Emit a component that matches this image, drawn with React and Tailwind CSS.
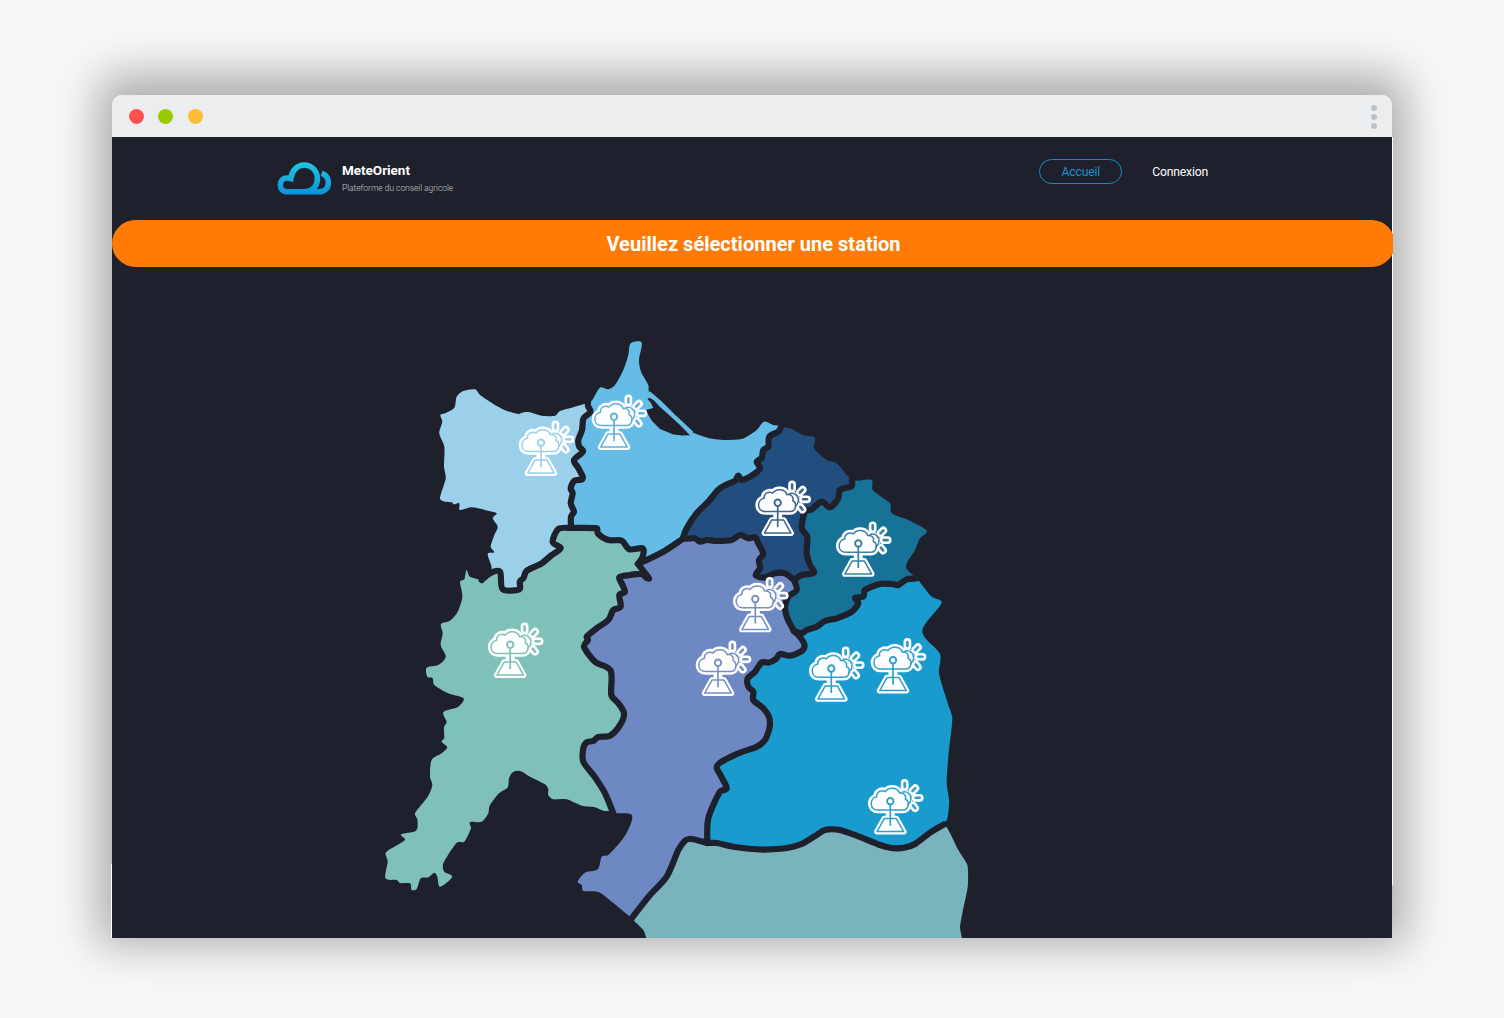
const BG = "#1e202b";

// Shared frontiers between neighbouring provinces.
const AB = "588,403 588,406 590.5,412 583.5,418.5 582,430 578.3,440 579.3,446.7 583,451.5 574,460 578.3,468 582.7,476.5 582,479.5 574.3,480.7 570.7,488.3 572.7,493.3 570.7,503.3 574,511.7 571,516.7 571,527";
const A_GREEN = "481.7,580 490,573.3 500,571.7 502.7,589.3 519.3,589.3 519.8,581.7 523.5,578 526.7,570.7 541.7,563.3 551.7,555 560.7,548 552.7,542 558.3,529 571,528";
const B_GREEN = "571,528 596.7,528.3 597.7,533.3 608.3,540 621.7,540.7 629.3,549.3 642.7,548.3 642.7,556.7 638,564";
const GREEN_PURPLE = "638,564 649,578.5 646,577.5 641.7,574 630,575 619.3,577.3 622,584 625,591.7 619.3,595 620.7,606.7 613.3,610 608.3,620 596.7,628.3 586.7,636.7 588,640 584,646.7 595,661.7 610.7,670.7 611.3,695 618.3,703.3 624,713.3 620,725 610,735.7 598.3,737 593,741 586.7,742.3 583.3,748.3 583.3,761.7 595,777.3 605,793.3 613.3,813.3";
const BC = "781,427 778.3,431.7 769.3,436.7 768.3,446.7 763.3,450 761.7,457.7 756.7,461.7 760,468.3 751.7,475.7 741.7,480 738.3,475.7 735,480.7 720,488.3 708.3,501.7 696.7,513.3 686.7,528.3 682.5,539";
const B_PURPLE = "682.5,539 663.3,551.7 638,564";
const C_PURPLE = "682.5,539 695,538.3 700,541.7 707,540 716,541 731.7,540 740,535 748.3,538.3 755,537.3 758.3,543.3 763.3,554 759,560 760,568.3 755.7,575 765,577.5 775,573.3 785,573.3 794,580";
const CD = "794,580 801.7,575 814,572.7 810,565 806.7,553.3 807.3,536.7 801.7,528.3 805,511.7 811.7,509.3 821.7,501.7 830,507.3 838.3,498.3 840,490 851.7,486 851.7,480";
const D_PURPLE = "794,580 796.7,590 788.3,596.7 785,606.7 787.3,618.3 794,631";
const DE = "794,631 801.7,633.3 806.7,630 816.7,626.7 825,621 836.7,618.3 851.7,611.7 858.3,603.3 855,597.7 863.3,596.7 865,590 880,584 892,584 898.3,585 906.7,579.3 916,578.5";
const E_PURPLE = "794,631 800,637 804.5,645 801.7,651 790,655.7 780,654 776,659 768.3,662.7 761.7,662.3 755,671.7 747.7,678.3 748.3,686.7 753.3,691.7 753.3,700 763.3,708.3 769,716.7 770,724 769,730 765,740 756.7,746.7 740,752.7 721.7,761.7 716.7,767.3 722,778 726.7,788.3 720,791.7 708.3,818.3 707.3,843";
const EF = "707.3,843 716.7,843 736.7,847.3 760,849.5 783.3,848.5 794,846.5 803.3,843.3 816.7,835 823,830.8 828.3,829.3 840,830 856.7,835.7 880,845 890,847.8 896.7,848.3 905,847.5 915,844 930,832.7 944,824.3";
const F_PURPLE = "707.3,843 693.3,839.3 689,839 685,840.7 678.3,850 666.7,876.7 650,895 631.7,918.3";

// Outlines facing the sea or the outside of the map.
const A_COAST = "487,574 491.7,568.3 487.7,554 494.3,552.3 490.7,546.7 494.3,535 497.7,526.7 492.7,518.3 496.7,513.3 489,511 471.7,507.3 460,510 459.3,503.3 454,504.5 451.7,502.3 445,501.7 440,498.3 445.7,478.3 444,466.7 444.3,446.7 439.3,433.3 442.3,421.7 440.3,415 445,413.3 454.3,407.7 456.7,396.7 463.3,391 475,389.3 480,395 496.7,406 507,411 518.3,414 523,412.5 530,412.3 541.7,415.7 555,415.7 560,411 571.7,407.7 584.3,404 588,403";
const B_COAST = "589,404 593,399 600,387.7 608.3,389.3 615,385 623.3,370 628.3,355 630.7,343.3 641.7,342.7 639,360 641,371.7 648.3,385 649.3,392.3 660,401.7 675,416.7 688.3,430 703.3,436.5 715,439.3 726.7,440 738,439.5 745,437.7 756.7,430 764,421.7 773.3,425 782,425.7";
const C_COAST = "781,427 790,428.3 803.3,435 815,437.7 814,448.3 826.7,460 836.7,463.3 846.7,475 851.7,480";
const D_COAST = "851.7,480 858,480.7 871.7,480 872.7,490 890,503.3 891.7,513.3 908.3,520 926.7,530.7 920,538.3 915,550 906,566.7 917,578.5";
const E_COAST = "917,578.5 923.3,586.7 931.7,596.7 941.7,602.7 922.3,631 940,654 939,673.3 948.3,705 952.3,718.3 948.3,756.7 946.7,783.3 949,800 947.7,816.7 944,824.3";
const F_EDGE = "944,824.3 958.3,850 967,864 968,872 967.7,886.7 963,910 960,926.7 960,940 649,940 643.3,930 633.3,920 631.7,918.3";
const GREEN_EDGE = "613.3,811 603.3,810.7 595,807.3 581.7,805.7 566.7,799.3 553.3,799.3 548.3,795 548.3,789 545,784.3 530,776.7 521.7,771.5 517,770.7 512.5,772.5 509,778.3 507.7,787.3 498.3,794 489.5,806 488.3,813.3 481.7,821.7 470,822 471,828.3 464.3,841.7 456.7,842.7 443.3,863.3 444.3,871.7 452.3,876.7 440,886.7 437.3,876.7 434.3,872.7 428.3,877.3 420.7,878.3 416.7,889 411.7,890 410,883.3 400,883 396.7,880 385.5,878.3 387.7,861.7 386,852.3 405,840 401,834.3 416,830.7 417.5,820 415,813.3 427.7,796.7 432.3,785 430,776.7 431.7,760 441.7,753.3 447.3,747.3 441.7,741.7 444.3,738 444,727 446.7,722 443.5,712 458.3,706.7 463.5,698.3 448.3,693.3 434.3,685 432.5,678 427.3,676.7 426.7,667.7 438.3,665 445.7,656.7 440.7,645 442.7,633.3 441,624 450,620.7 457.7,611.7 462.3,596.7 460,581.7 464.3,579.3 466.5,570 470,576.7 481.7,580";
const PURPLE_EDGE = "631.7,918.3 630,916.7 611.7,901.7 598.3,892 583.3,891 581.7,885 577.7,881.7 585,872.7 597.7,869.3 601.7,856.7 608.3,855 623.3,838.3 631,823.3 631,814.3 613.3,813.3";

const rev = (s) => s.split(" ").reverse().join(" ");
const ring = (...parts) => parts.join(" ");

// Softens the corners of a list of points with a loose Catmull-Rom spline.
function smooth(points, closed) {
  const all = points.split(" ").map((p) => p.split(",").map(Number));
  const pts = all.filter((p, i) => i === 0 || p[0] !== all[i - 1][0] || p[1] !== all[i - 1][1]);
  const n = pts.length;
  const at = (i) => (closed ? pts[(i + n) % n] : pts[Math.max(0, Math.min(n - 1, i))]);
  const handle = (p, a, b, other, sign) => {
    const dx = b[0] - a[0];
    const dy = b[1] - a[1];
    const len = Math.hypot(dx, dy) || 1;
    const reach = Math.min(len * 0.15, Math.hypot(other[0] - p[0], other[1] - p[1]) * 0.3);
    return [(p[0] + (sign * dx * reach) / len).toFixed(1), (p[1] + (sign * dy * reach) / len).toFixed(1)];
  };
  let d = `M${pts[0][0]} ${pts[0][1]}`;
  for (let i = 0; i < (closed ? n : n - 1); i++) {
    const [p0, p1, p2, p3] = [at(i - 1), at(i), at(i + 1), at(i + 2)];
    const c1 = handle(p1, p0, p2, p2, 1);
    const c2 = handle(p2, p1, p3, p1, -1);
    d += `C${c1[0]} ${c1[1]} ${c2[0]} ${c2[1]} ${p2[0]} ${p2[1]}`;
  }
  return closed ? d + "Z" : d;
}

const REGIONS = [
  { fill: "#9bd0eb", points: ring(A_COAST, AB, rev(A_GREEN)) },
  { fill: "#64bce7", points: ring(B_COAST, BC, B_PURPLE, rev(B_GREEN), rev(AB)) },
  { fill: "#224e7f", points: ring(C_COAST, rev(CD), rev(C_PURPLE), rev(BC)) },
  { fill: "#177297", points: ring(D_COAST, rev(DE), rev(D_PURPLE), CD) },
  { fill: "#199ccd", points: ring(E_COAST, rev(EF), rev(E_PURPLE), DE) },
  { fill: "#7fc1b9", points: ring(A_GREEN, B_GREEN, GREEN_PURPLE, GREEN_EDGE) },
  { fill: "#6d88c3", points: ring(rev(GREEN_PURPLE), rev(B_PURPLE), C_PURPLE, D_PURPLE, E_PURPLE, F_PURPLE, PURPLE_EDGE) },
  { fill: "#79b3bd", points: ring(rev(F_PURPLE), EF, F_EDGE) },
];

const BORDERS = [AB, A_GREEN, B_GREEN, GREEN_PURPLE, BC, B_PURPLE, C_PURPLE, CD, D_PURPLE, DE, E_PURPLE, EF, F_PURPLE];

const STATIONS = [
  { x: 541, y: 442.7, tint: "#9bd0eb" },
  { x: 614, y: 416.7, tint: "#5fb1dc" },
  { x: 777.7, y: 502.7, tint: "#3f6591" },
  { x: 858.3, y: 543.5, tint: "#3583a4" },
  { x: 755.3, y: 599, tint: "#7690c7" },
  { x: 718, y: 662.7, tint: "#7690c7" },
  { x: 831.3, y: 668.5, tint: "#2f9fcb" },
  { x: 893, y: 660.2, tint: "#2f9fcb" },
  { x: 890.3, y: 801.2, tint: "#2f9fcb" },
  { x: 510.2, y: 644.7, tint: "#7fc1b9" },
];

const CLOUD = "M-12.5 8.8C-21 8.8 -21.2 -3 -13.5 -4.5C-14 -9.6 -8.5 -11.8 -5 -9.6C-1.5 -14.6 7.5 -14 9.3 -8C14 -8.6 16.2 -5.4 15 -2C19.8 0 18.6 8.8 12.5 8.8Z";
const TRAPEZE = "M-6 17.4H6L13.3 30.4H-13.3Z";
const RAYS = "M14.4 -18.2V-14.2M25 -13L22.2 -10.2M25.4 -3.4H29.4M22.6 4.2L24.8 7";

function Station({ x, y, tint }) {
  return (
    <g transform={`translate(${x} ${y})`} strokeLinecap="round" strokeLinejoin="round">
      <g fill="#fff" stroke="#fff">
        <path d={RAYS} strokeWidth="7.8" />
        <circle cx="13" cy="-2.5" r="6.6" strokeWidth="5" />
        <path d={CLOUD} strokeWidth="6.6" />
        <path d="M0 10V18" strokeWidth="9" />
        <path d={TRAPEZE} strokeWidth="5.8" />
      </g>
      <g fill="none" stroke={tint} strokeWidth="1.5">
        <path d={RAYS} strokeWidth="2.6" />
        <path d="M11.7 -9C17 -10.6 21.2 -6.6 20.6 -2C20.4 0.6 19 2.6 17.6 3.6" />
        <path d={CLOUD} />
        <path d={TRAPEZE} />
        <circle r="3.2" strokeWidth="1.9" />
        <path d="M0 3.5V24.5" strokeWidth="1.7" strokeLinecap="butt" />
      </g>
    </g>
  );
}

function CloudLogo() {
  return (
    <svg className="mt-px h-[34px] w-[54px]" viewBox="-0.6 0 54 34" fill="none">
      <defs>
        <linearGradient id="logo" x1="0" y1="0" x2="0" y2="34" gradientUnits="userSpaceOnUse">
          <stop offset="0" stopColor="#1fc8e0" />
          <stop offset="1" stopColor="#0b90dc" />
        </linearGradient>
      </defs>
      <g stroke="url(#logo)" strokeWidth="5.6">
        <path d="M36 29.8H9.5C0.5 29.8 0.5 16 9.5 16C11 16 12 16.2 13.2 16.6C14.2 8.6 19.6 3 26.6 3C34 3 39.8 8.8 39.8 16.4C39.8 24 35 29.8 27.6 29.8" />
        <path d="M33 29.8H41.4C47 29.8 50.8 26 50.8 20.8C50.8 16.4 48 12.8 44 11.4" />
      </g>
    </svg>
  );
}

function StationMap() {
  return (
    <svg className="block h-[671px] w-[1280px]" viewBox="112 267 1280 671">
      {REGIONS.map((r) => (
        <path key={r.fill} d={smooth(r.points, true)} fill={r.fill} />
      ))}
      <path
        d="M647.3 398.5L650 398L654 400.5L660 407L668 414L680 425L690 435.3L682 435.6L673.3 434.5L660 429L652 421L647.3 413.3L646 410L653.3 408L651 403Z"
        fill={BG}
      />
      <path d="M649 392.5L660 401.8L675 416.7L692 432.5" fill="none" stroke="#64bce7" strokeWidth="3" />
      <g fill="none" stroke={BG} strokeWidth="6.2" strokeLinejoin="round" strokeLinecap="round">
        {BORDERS.map((b) => (
          <path key={b} d={smooth(b, false)} />
        ))}
      </g>
      {STATIONS.map((s) => (
        <Station key={`${s.x}-${s.y}`} {...s} />
      ))}
    </svg>
  );
}

export default function App() {
  return (
    <div className="h-[1018px] w-[1504px] overflow-hidden bg-[#f7f7f7] px-28 pt-[95px] font-['Roboto',sans-serif]">
      <div className="relative h-[843px] w-[1280px] rounded-t-[10px] shadow-[0_-7px_44px_14px_rgba(0,0,0,0.3)]">
        <div className="absolute top-[42px] left-[1280px] h-[748px] w-px bg-white" />
        <div className="absolute top-[769px] -left-px h-[74px] w-px bg-white" />
        <div className="flex h-[42px] items-center justify-between rounded-t-[10px] bg-[#ecedef] pt-0.5 pr-[15px] pl-[16.5px]">
          <div className="-mt-px flex gap-[14.7px]">
            <span className="size-[15px] rounded-full bg-[#ff524f]" />
            <span className="size-[15px] rounded-full bg-[#99cc00]" />
            <span className="size-[15px] rounded-full bg-[#ffbb33]" />
          </div>
          <div className="flex flex-col gap-[3px]">
            <span className="size-1.5 rounded-full bg-[#bdc2c6]" />
            <span className="size-1.5 rounded-full bg-[#bdc2c6]" />
            <span className="size-1.5 rounded-full bg-[#bdc2c6]" />
          </div>
        </div>
        <div className="h-[801px] bg-[#1e202b]">
          <header className="flex h-[83px] items-start justify-between pr-[184px] pl-[165px]">
            <div className="flex pt-6">
              <CloudLogo />
              <div className="-mt-px pl-[11px]">
                <div className="text-[13.5px] leading-[20px] font-bold tracking-[-0.03px] text-white">MeteOrient</div>
                <div className="pt-[2px] text-[8.5px] leading-[13px] font-light tracking-[-0.05px] text-[#c9cad0]">
                  Plateforme du conseil agricole
                </div>
              </div>
            </div>
            <nav className="flex items-center gap-[30px] pt-[22px] text-[12.2px] tracking-[-0.2px]">
              <a className="flex h-[25px] w-[83px] items-center justify-center rounded-full border-[1.5px] border-[#158cc6] pt-px text-[#1f8fd0]">
                Accueil
              </a>
              <a className="pt-px text-white">Connexion</a>
            </nav>
          </header>
          <div className="flex h-[47px] w-[1281px] items-center justify-center overflow-hidden">
            <div className="flex h-[47px] w-[1283px] shrink-0 translate-x-px items-center justify-center rounded-full bg-[#ff7b06] text-[20px] font-bold tracking-[0.02px] text-white">
              Veuillez sélectionner une station
            </div>
          </div>
          <StationMap />
        </div>
      </div>
    </div>
  );
}
